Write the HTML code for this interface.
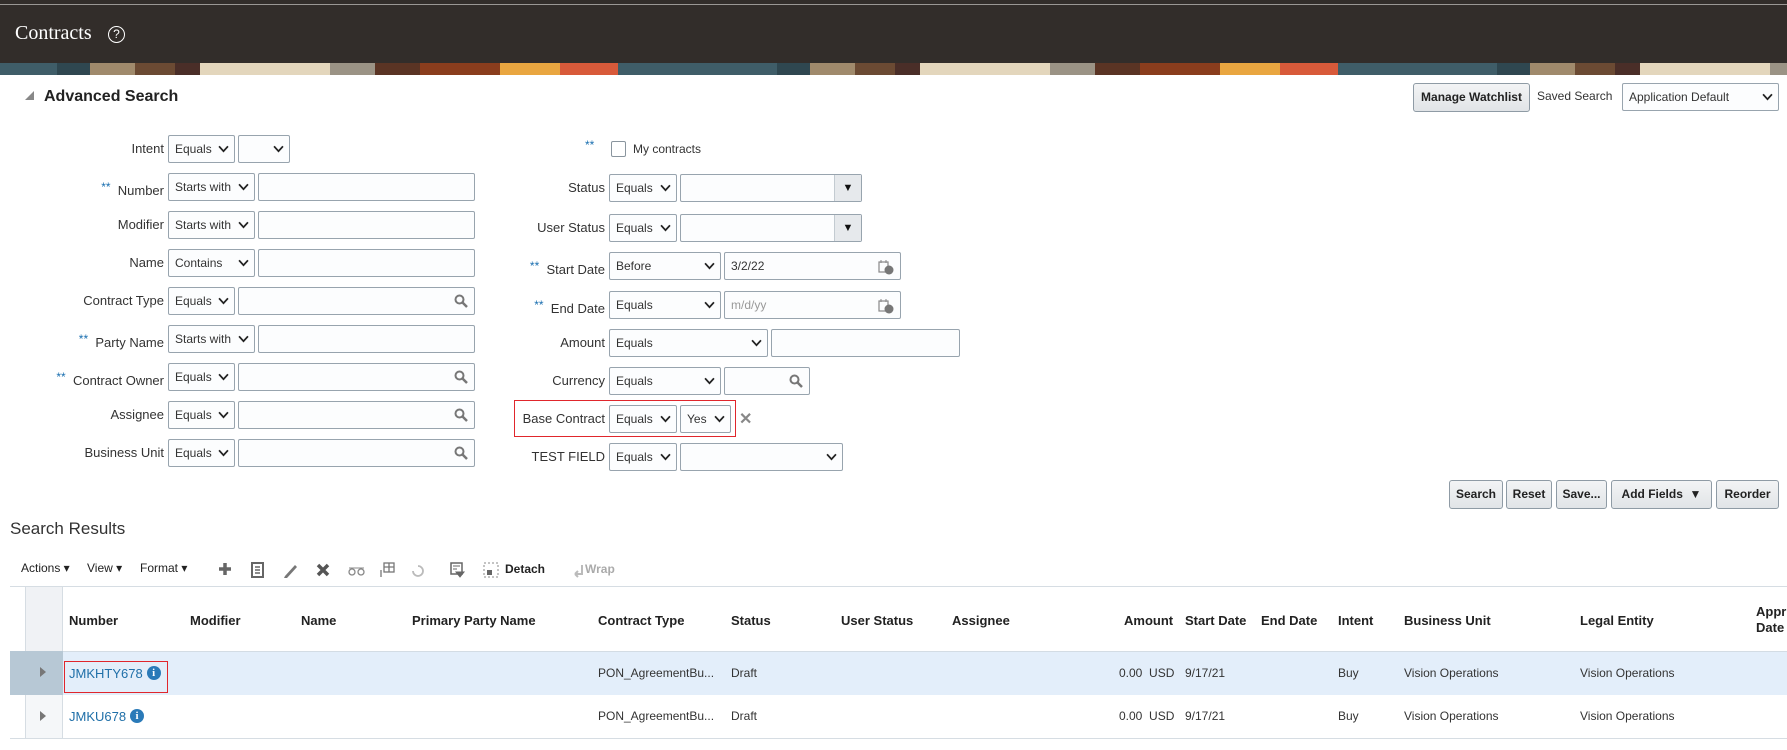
<!DOCTYPE html>
<html><head><meta charset="utf-8"><style>
*{box-sizing:border-box;margin:0;padding:0}
body{width:1787px;height:750px;overflow:hidden;background:#fff;font-family:"Liberation Sans",Arial,sans-serif;font-size:13px;color:#333;position:relative}
.a{position:absolute;white-space:nowrap}
.hdr{left:0;top:0;width:1787px;height:63px;background:#322d2a}
.topline{left:0;top:4px;width:1787px;height:1px;background:#9a9794}
.strip{left:0;top:63px;width:1787px;height:12px;background:repeating-linear-gradient(90deg,#3f5d68 0 57px,#2f4750 57px 90px,#a08a6c 90px 135px,#6b4a33 135px 175px,#4a2e28 175px 200px,#e3d6bc 200px 330px,#9b9385 330px 375px,#5a3424 375px 420px,#8a3d1d 420px 500px,#e9a640 500px 560px,#d85a3a 560px 618px,#3f5d68 618px 720px)}
.lbl{text-align:right;line-height:28px;height:28px;color:#333}
.f{position:absolute;height:28px;border:1px solid #98a4ae;border-radius:2px;background:#fcfdfe;line-height:26px;padding-left:6px;color:#333;font-size:12px}
.chev{position:absolute;right:5px;top:9px;width:11px;height:8px}
.mag{position:absolute;right:6px;top:6px}
.dd{position:absolute;right:0;top:0;width:27px;height:26px;background:#e6e9ec;border-left:1px solid #c3cbd1;text-align:center;font-size:11px;line-height:26px;color:#111}
.req{color:#1a6fb0;font-size:12px}
.btn{position:absolute;height:29px;border:1px solid #8f9ba5;border-radius:3px;background:linear-gradient(#f3f4f5,#e1e4e7);font-weight:bold;font-size:12px;line-height:27px;text-align:center;color:#222}
.th{font-weight:bold;font-size:13px;color:#222}
.td{font-size:12px;color:#333}
.link{color:#1f6fa8;font-size:13px}
.info{display:inline-block;width:14px;height:14px;border-radius:50%;background:#2a7ab8;color:#fff;font-size:11px;font-weight:bold;text-align:center;line-height:14px;font-family:"Liberation Serif",serif;vertical-align:2px;margin-left:4px}
</style></head><body>
<div class="a hdr"></div><div class="a topline"></div><div class="a strip"></div>
<div class="a" style="left:15px;top:22px;font-family:'Liberation Serif',serif;font-size:20px;color:#fff">Contracts</div>
<div class="a" style="left:108px;top:26px;width:17px;height:17px;border:1.5px solid #fff;border-radius:50%;color:#fff;font-size:12px;text-align:center;line-height:14px">?</div>

<div class="a" style="left:25px;top:91px;width:0;height:0;border-left:9px solid transparent;border-bottom:9px solid #888"></div>
<div class="a" style="left:44px;top:88px;font-size:16px;font-weight:bold;color:#222">Advanced Search</div>

<div class="btn" style="left:1413px;top:83px;width:117px;">Manage Watchlist</div>
<div class="a" style="left:1537px;top:89px;font-size:12px;color:#333">Saved Search</div>
<div class="f" style="left:1622px;top:83px;width:157px;height:28px;font-size:12px">Application Default<svg class="chev" viewBox="0 0 12 9"><path d="M1 1.5 6 7 11 1.5" stroke="#222" stroke-width="2" fill="none"/></svg></div>

<!-- LEFT COLUMN -->
<div class="a lbl" style="left:0;width:164px;top:135px">Intent</div>
<div class="f" style="left:168px;top:135px;width:67px">Equals<svg class="chev" viewBox="0 0 12 9"><path d="M1 1.5 6 7 11 1.5" stroke="#222" stroke-width="2" fill="none"/></svg></div>
<div class="f" style="left:238px;top:135px;width:52px"><svg class="chev" viewBox="0 0 12 9"><path d="M1 1.5 6 7 11 1.5" stroke="#222" stroke-width="2" fill="none"/></svg></div>

<div class="a lbl" style="left:0;width:164px;top:173px"><span class="req" style="vertical-align:4px">**</span>&nbsp; Number</div>
<div class="f" style="left:168px;top:173px;width:87px">Starts with<svg class="chev" viewBox="0 0 12 9"><path d="M1 1.5 6 7 11 1.5" stroke="#222" stroke-width="2" fill="none"/></svg></div>
<div class="f" style="left:258px;top:173px;width:217px"></div>

<div class="a lbl" style="left:0;width:164px;top:211px">Modifier</div>
<div class="f" style="left:168px;top:211px;width:87px">Starts with<svg class="chev" viewBox="0 0 12 9"><path d="M1 1.5 6 7 11 1.5" stroke="#222" stroke-width="2" fill="none"/></svg></div>
<div class="f" style="left:258px;top:211px;width:217px"></div>

<div class="a lbl" style="left:0;width:164px;top:249px">Name</div>
<div class="f" style="left:168px;top:249px;width:87px">Contains<svg class="chev" viewBox="0 0 12 9"><path d="M1 1.5 6 7 11 1.5" stroke="#222" stroke-width="2" fill="none"/></svg></div>
<div class="f" style="left:258px;top:249px;width:217px"></div>

<div class="a lbl" style="left:0;width:164px;top:287px">Contract Type</div>
<div class="f" style="left:168px;top:287px;width:67px">Equals<svg class="chev" viewBox="0 0 12 9"><path d="M1 1.5 6 7 11 1.5" stroke="#222" stroke-width="2" fill="none"/></svg></div>
<div class="f" style="left:238px;top:287px;width:237px"><svg class="mag" width="14" height="14" viewBox="0 0 14 14"><circle cx="5.5" cy="5.5" r="4" stroke="#777" stroke-width="2" fill="none"/><path d="M8.5 8.5 13 13" stroke="#777" stroke-width="2.5"/></svg></div>

<div class="a lbl" style="left:0;width:164px;top:325px"><span class="req" style="vertical-align:4px">**</span>&nbsp; Party Name</div>
<div class="f" style="left:168px;top:325px;width:87px">Starts with<svg class="chev" viewBox="0 0 12 9"><path d="M1 1.5 6 7 11 1.5" stroke="#222" stroke-width="2" fill="none"/></svg></div>
<div class="f" style="left:258px;top:325px;width:217px"></div>

<div class="a lbl" style="left:0;width:164px;top:363px"><span class="req" style="vertical-align:4px">**</span>&nbsp; Contract Owner</div>
<div class="f" style="left:168px;top:363px;width:67px">Equals<svg class="chev" viewBox="0 0 12 9"><path d="M1 1.5 6 7 11 1.5" stroke="#222" stroke-width="2" fill="none"/></svg></div>
<div class="f" style="left:238px;top:363px;width:237px"><svg class="mag" width="14" height="14" viewBox="0 0 14 14"><circle cx="5.5" cy="5.5" r="4" stroke="#777" stroke-width="2" fill="none"/><path d="M8.5 8.5 13 13" stroke="#777" stroke-width="2.5"/></svg></div>

<div class="a lbl" style="left:0;width:164px;top:401px">Assignee</div>
<div class="f" style="left:168px;top:401px;width:67px">Equals<svg class="chev" viewBox="0 0 12 9"><path d="M1 1.5 6 7 11 1.5" stroke="#222" stroke-width="2" fill="none"/></svg></div>
<div class="f" style="left:238px;top:401px;width:237px"><svg class="mag" width="14" height="14" viewBox="0 0 14 14"><circle cx="5.5" cy="5.5" r="4" stroke="#777" stroke-width="2" fill="none"/><path d="M8.5 8.5 13 13" stroke="#777" stroke-width="2.5"/></svg></div>

<div class="a lbl" style="left:0;width:164px;top:439px">Business Unit</div>
<div class="f" style="left:168px;top:439px;width:67px">Equals<svg class="chev" viewBox="0 0 12 9"><path d="M1 1.5 6 7 11 1.5" stroke="#222" stroke-width="2" fill="none"/></svg></div>
<div class="f" style="left:238px;top:439px;width:237px"><svg class="mag" width="14" height="14" viewBox="0 0 14 14"><circle cx="5.5" cy="5.5" r="4" stroke="#777" stroke-width="2" fill="none"/><path d="M8.5 8.5 13 13" stroke="#777" stroke-width="2.5"/></svg></div>

<!-- RIGHT COLUMN -->
<div class="a req" style="left:585px;top:138px">**</div>
<div class="a" style="left:611px;top:141px;width:15px;height:16px;border:1px solid #8a959e;border-radius:2px;background:#fff"></div>
<div class="a" style="left:633px;top:142px;font-size:12px">My contracts</div>

<div class="a lbl" style="left:400px;width:205px;top:174px">Status</div>
<div class="f" style="left:609px;top:174px;width:68px">Equals<svg class="chev" viewBox="0 0 12 9"><path d="M1 1.5 6 7 11 1.5" stroke="#222" stroke-width="2" fill="none"/></svg></div>
<div class="f" style="left:680px;top:174px;width:182px"><div class="dd">▼</div></div>

<div class="a lbl" style="left:400px;width:205px;top:214px">User Status</div>
<div class="f" style="left:609px;top:214px;width:68px">Equals<svg class="chev" viewBox="0 0 12 9"><path d="M1 1.5 6 7 11 1.5" stroke="#222" stroke-width="2" fill="none"/></svg></div>
<div class="f" style="left:680px;top:214px;width:182px"><div class="dd">▼</div></div>

<div class="a lbl" style="left:400px;width:205px;top:252px"><span class="req" style="vertical-align:4px">**</span>&nbsp; Start Date</div>
<div class="f" style="left:609px;top:252px;width:112px">Before<svg class="chev" viewBox="0 0 12 9"><path d="M1 1.5 6 7 11 1.5" stroke="#222" stroke-width="2" fill="none"/></svg></div>
<div class="f" style="left:724px;top:252px;width:177px">3/2/22<svg class="mag" width="16" height="16" viewBox="0 0 16 16"><rect x="1" y="3" width="9" height="10" fill="none" stroke="#888" stroke-width="1.2"/><path d="M3 1v3M8 1v3" stroke="#888"/><circle cx="11" cy="11" r="4.5" fill="#777"/></svg></div>

<div class="a lbl" style="left:400px;width:205px;top:291px"><span class="req" style="vertical-align:4px">**</span>&nbsp; End Date</div>
<div class="f" style="left:609px;top:291px;width:112px">Equals<svg class="chev" viewBox="0 0 12 9"><path d="M1 1.5 6 7 11 1.5" stroke="#222" stroke-width="2" fill="none"/></svg></div>
<div class="f" style="left:724px;top:291px;width:177px;color:#999">m/d/yy<svg class="mag" width="16" height="16" viewBox="0 0 16 16"><rect x="1" y="3" width="9" height="10" fill="none" stroke="#888" stroke-width="1.2"/><path d="M3 1v3M8 1v3" stroke="#888"/><circle cx="11" cy="11" r="4.5" fill="#777"/></svg></div>

<div class="a lbl" style="left:400px;width:205px;top:329px">Amount</div>
<div class="f" style="left:609px;top:329px;width:159px">Equals<svg class="chev" viewBox="0 0 12 9"><path d="M1 1.5 6 7 11 1.5" stroke="#222" stroke-width="2" fill="none"/></svg></div>
<div class="f" style="left:771px;top:329px;width:189px"></div>

<div class="a lbl" style="left:400px;width:205px;top:367px">Currency</div>
<div class="f" style="left:609px;top:367px;width:112px">Equals<svg class="chev" viewBox="0 0 12 9"><path d="M1 1.5 6 7 11 1.5" stroke="#222" stroke-width="2" fill="none"/></svg></div>
<div class="f" style="left:724px;top:367px;width:86px"><svg class="mag" width="14" height="14" viewBox="0 0 14 14"><circle cx="5.5" cy="5.5" r="4" stroke="#777" stroke-width="2" fill="none"/><path d="M8.5 8.5 13 13" stroke="#777" stroke-width="2.5"/></svg></div>

<div class="a" style="left:514px;top:400px;width:222px;height:37px;border:1px solid #e0262c"></div>
<div class="a lbl" style="left:400px;width:205px;top:405px">Base Contract</div>
<div class="f" style="left:609px;top:405px;width:68px">Equals<svg class="chev" viewBox="0 0 12 9"><path d="M1 1.5 6 7 11 1.5" stroke="#222" stroke-width="2" fill="none"/></svg></div>
<div class="f" style="left:680px;top:405px;width:51px">Yes<svg class="chev" viewBox="0 0 12 9"><path d="M1 1.5 6 7 11 1.5" stroke="#222" stroke-width="2" fill="none"/></svg></div>
<div class="a" style="left:739px;top:409px;font-size:16px;font-weight:bold;color:#888">✕</div>

<div class="a lbl" style="left:400px;width:205px;top:443px">TEST FIELD</div>
<div class="f" style="left:609px;top:443px;width:68px">Equals<svg class="chev" viewBox="0 0 12 9"><path d="M1 1.5 6 7 11 1.5" stroke="#222" stroke-width="2" fill="none"/></svg></div>
<div class="f" style="left:680px;top:443px;width:163px"><svg class="chev" viewBox="0 0 12 9"><path d="M1 1.5 6 7 11 1.5" stroke="#222" stroke-width="2" fill="none"/></svg></div>

<!-- buttons -->
<div class="btn" style="left:1449px;top:480px;width:54px">Search</div>
<div class="btn" style="left:1506px;top:480px;width:46px">Reset</div>
<div class="btn" style="left:1556px;top:480px;width:51px">Save...</div>
<div class="btn" style="left:1611px;top:480px;width:101px">Add Fields&nbsp; ▼</div>
<div class="btn" style="left:1716px;top:480px;width:63px">Reorder</div>

<!-- results -->
<div class="a" style="left:10px;top:519px;font-size:17px;color:#333">Search Results</div>
<div class="a" style="left:21px;top:561px;font-size:12px;color:#222">Actions ▾</div>
<div class="a" style="left:87px;top:561px;font-size:12px;color:#222">View ▾</div>
<div class="a" style="left:140px;top:561px;font-size:12px;color:#222">Format ▾</div>
<svg class="a" style="left:218px;top:560px" width="400" height="20" viewBox="0 0 400 20">
<path d="M7 3v12M1 9h12" stroke="#666" stroke-width="3.5"/>
<rect x="34" y="3" width="11" height="14" fill="none" stroke="#666" stroke-width="2"/><path d="M37 7h5M37 10h5M37 13h5" stroke="#666" stroke-width="1.5"/>
<path d="M67 16 L77 5 L79 7 L69 18 L66 18Z" fill="#777"/>
<path d="M100 5 L110 15 M110 5 L100 15" stroke="#555" stroke-width="3.5"/>
<circle cx="134" cy="12" r="3" fill="none" stroke="#888" stroke-width="1.3"/><circle cx="143" cy="12" r="3" fill="none" stroke="#888" stroke-width="1.3"/><path d="M131 8h15" stroke="#888"/>
<rect x="166" y="3" width="10" height="9" fill="none" stroke="#777" stroke-width="1.3"/><path d="M166 7h10M171 3v9M163 10v7" stroke="#777" stroke-width="1.3"/>
<path d="M200 6 A5 5 0 1 1 195 11" fill="none" stroke="#bbb" stroke-width="1.8"/>
<rect x="233" y="3" width="11" height="11" fill="none" stroke="#666" stroke-width="1.5"/><path d="M235 6h7M235 9h4M238 12h8l-4 5z" fill="#666" stroke="#666" stroke-width="1"/>
<rect x="266" y="3" width="14" height="14" fill="none" stroke="#888" stroke-dasharray="2 2"/><rect x="269" y="10" width="5" height="5" fill="#666"/>
<path d="M364 5v9h-7M357 14l3-3M357 14l3 3" stroke="#bbb" stroke-width="2" fill="none"/>
</svg>
<div class="a" style="left:505px;top:562px;font-size:12px;font-weight:bold;color:#222">Detach</div>
<div class="a" style="left:585px;top:562px;font-size:12px;font-weight:bold;color:#aaa">Wrap</div>

<div class="a" style="left:10px;top:586px;width:1777px;height:1px;background:#d6dde3"></div>
<div class="a" style="left:25px;top:587px;width:38px;height:64px;background:#f0f2f5;border-left:1px solid #d6dde3;border-right:1px solid #d6dde3"></div>
<div class="a" style="left:10px;top:651px;width:1777px;height:44px;background:#e3eefa;border-top:1px solid #d3dce4"></div>
<div class="a" style="left:10px;top:651px;width:53px;height:44px;background:#b7c8d5"></div>
<div class="a" style="left:25px;top:695px;width:38px;height:44px;background:#f5f7f9;border-left:1px solid #d6dde3;border-right:1px solid #d6dde3"></div>
<div class="a" style="left:10px;top:738px;width:1777px;height:1px;background:#d6dde3"></div>
<div class="a" style="left:40px;top:667px;width:0;height:0;border-top:5px solid transparent;border-bottom:5px solid transparent;border-left:6px solid #777"></div>
<div class="a" style="left:40px;top:711px;width:0;height:0;border-top:5px solid transparent;border-bottom:5px solid transparent;border-left:6px solid #777"></div>

<div class="a th" style="left:69px;top:613px">Number</div>
<div class="a th" style="left:190px;top:613px">Modifier</div>
<div class="a th" style="left:301px;top:613px">Name</div>
<div class="a th" style="left:412px;top:613px">Primary Party Name</div>
<div class="a th" style="left:598px;top:613px">Contract Type</div>
<div class="a th" style="left:731px;top:613px">Status</div>
<div class="a th" style="left:841px;top:613px">User Status</div>
<div class="a th" style="left:952px;top:613px">Assignee</div>
<div class="a th" style="left:1124px;top:613px">Amount</div>
<div class="a th" style="left:1185px;top:613px">Start Date</div>
<div class="a th" style="left:1261px;top:613px">End Date</div>
<div class="a th" style="left:1338px;top:613px">Intent</div>
<div class="a th" style="left:1404px;top:613px">Business Unit</div>
<div class="a th" style="left:1580px;top:613px">Legal Entity</div>
<div class="a th" style="left:1756px;top:604px;line-height:16px">Appr<br>Date</div>

<div class="a" style="left:64px;top:661px;width:104px;height:32px;border:1px solid #e0262c"></div>
<div class="a link" style="left:69px;top:666px">JMKHTY678<span class="info">i</span></div>
<div class="a link" style="left:69px;top:709px">JMKU678<span class="info">i</span></div>
<div class="a td" style="left:598px;top:666px">PON_AgreementBu...</div>
<div class="a td" style="left:731px;top:666px">Draft</div>
<div class="a td" style="left:1119px;top:666px">0.00&nbsp; USD</div>
<div class="a td" style="left:1185px;top:666px">9/17/21</div>
<div class="a td" style="left:1338px;top:666px">Buy</div>
<div class="a td" style="left:1404px;top:666px">Vision Operations</div>
<div class="a td" style="left:1580px;top:666px">Vision Operations</div>
<div class="a td" style="left:598px;top:709px">PON_AgreementBu...</div>
<div class="a td" style="left:731px;top:709px">Draft</div>
<div class="a td" style="left:1119px;top:709px">0.00&nbsp; USD</div>
<div class="a td" style="left:1185px;top:709px">9/17/21</div>
<div class="a td" style="left:1338px;top:709px">Buy</div>
<div class="a td" style="left:1404px;top:709px">Vision Operations</div>
<div class="a td" style="left:1580px;top:709px">Vision Operations</div>
</body></html>
